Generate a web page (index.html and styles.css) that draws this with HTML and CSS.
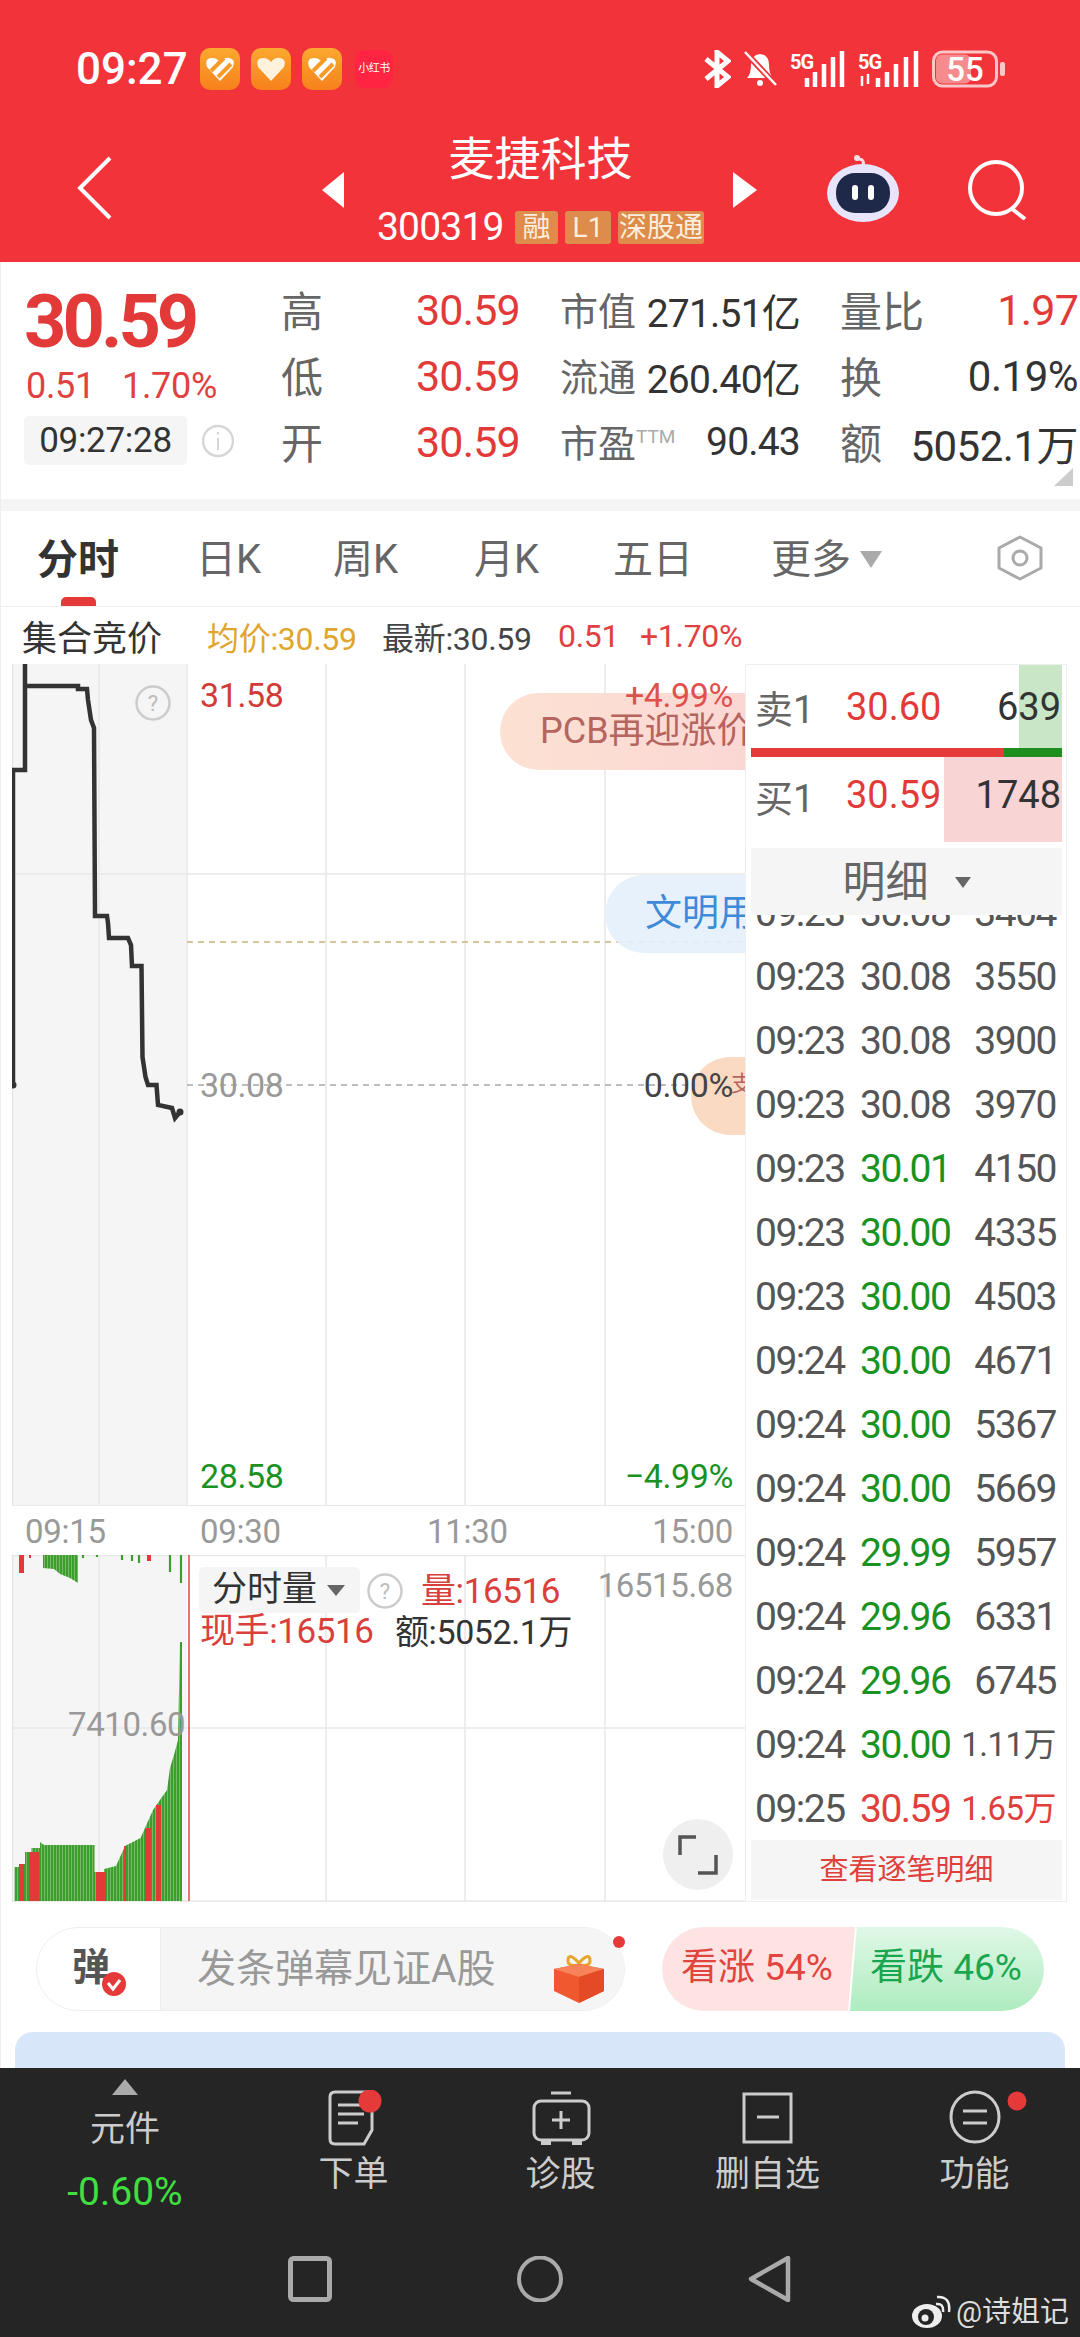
FILE: index.html
```html
<!DOCTYPE html>
<html lang="zh-CN">
<head>
    <meta charset="UTF-8">
    <title>麦捷科技 300319</title>
    <link rel="stylesheet" href="styles.css">
</head>
<body>
<svg class="defs" width="0" height="0">
    <defs>
        <linearGradient id="orange" x1="0" y1="0" x2="0" y2="1">
            <stop offset="0" stop-color="#fba92f"/>
            <stop offset="1" stop-color="#f7801c"/>
        </linearGradient>
        <pattern id="barGreen" width="3" height="10" patternUnits="userSpaceOnUse">
            <rect width="3" height="10" fill="#86c077"/>
            <rect width="2.2" height="10" fill="#3c9e2c"/>
        </pattern>
    </defs>
</svg>
<div class="page">
    <header class="head">
        <div class="status">
            <span class="clock">09:27</span>
            <svg class="app" width="40" height="42" viewBox="0 0 40 42">
                <rect width="40" height="42" rx="10" fill="url(#orange)"/>
                <path d="M20 33 L7 19 Q4 10 12 10 Q17 10 20 14 Q24 9 29 10 Q36 11 33 19Z" fill="#fff"/>
                <path d="M11 23 L24 10 M18 29 L31 16" stroke="#f99a26" stroke-width="4"/>
            </svg>
            <svg class="app" width="40" height="42" viewBox="0 0 40 42">
                <rect width="40" height="42" rx="10" fill="url(#orange)"/>
                <path d="M20 33 L7 19 Q4 10 12 10 Q17 10 20 14 Q24 9 29 10 Q36 11 33 19Z" fill="#fff2dd"/>
            </svg>
            <svg class="app" width="40" height="42" viewBox="0 0 40 42">
                <rect width="40" height="42" rx="10" fill="url(#orange)"/>
                <path d="M20 33 L7 19 Q4 10 12 10 Q17 10 20 14 Q24 9 29 10 Q36 11 33 19Z" fill="#fff"/>
                <path d="M11 23 L24 10 M18 29 L31 16" stroke="#f99a26" stroke-width="4"/>
            </svg>
            <span class="app-red">小红书</span>
            <span class="status-right">
                <svg class="bt" width="28" height="38" viewBox="0 0 28 38">
                    <path d="M3 9 L25 27 L14 36 V2 L25 11 L3 29" fill="none" stroke="#fff" stroke-width="5"/>
                </svg>
                <svg width="36" height="40" viewBox="0 0 36 40">
                    <path d="M5 29 Q9 25 9 16 Q9 6 18 5 Q27 6 27 16 Q27 25 31 29Z" fill="#fff"/>
                    <circle cx="18" cy="34" r="3" fill="#fff"/>
                    <path d="M2 2 L34 36" stroke="#f23339" stroke-width="6"/>
                    <path d="M3 3 L34 36" stroke="#fff" stroke-width="2.5"/>
                </svg>
                <svg width="56" height="38" viewBox="0 0 56 38">
                    <text x="0" y="19" class="net">5G</text>
                    <path d="M17 28 V37 M25 22 V37 M34 14 V37 M43 7 V37 M52 1 V37" stroke="#fff" stroke-width="4.5"/>
                </svg>
                <svg width="62" height="38" viewBox="0 0 62 38">
                    <text x="0" y="19" class="net">5G</text>
                    <path d="M4 26 V36 M10 24 V34" stroke="#fff" stroke-width="2.5"/>
                    <path d="M20 28 V37 M29 22 V37 M38 14 V37 M48 7 V37 M58 1 V37" stroke="#fff" stroke-width="4.5"/>
                </svg>
                <svg width="74" height="38" viewBox="0 0 74 38">
                    <rect x="1.5" y="2" width="63" height="34" rx="9" fill="none" stroke="#fbc6c8" stroke-width="3"/>
                    <rect x="4" y="4.500" width="35" height="29" rx="6" fill="#f68b8e"/>
                    <rect x="68" y="12" width="5" height="14" rx="2" fill="#fbc6c8"/>
                    <text x="33" y="31" class="batt">55</text>
                </svg>
            </span>
        </div>
        <div class="topbar">
            <svg class="back" width="36" height="64" viewBox="0 0 36 64">
                <path d="M33 2 L3 32 L33 62" fill="none" stroke="#fff" stroke-width="4"/>
            </svg>
            <div class="stock">
                <i class="tri-left"></i>
                <div class="stock-mid">
                    <div class="stock-name">麦捷科技</div>
                    <div class="stock-code">
                        <span class="code">300319</span>
                        <span class="tag tag-a">融</span>
                        <span class="tag tag-b">L1</span>
                        <span class="tag tag-c">深股通</span>
                    </div>
                </div>
                <i class="tri-right"></i>
            </div>
            <div class="top-actions">
                <svg width="74" height="68" viewBox="0 0 74 68">
                    <path d="M37 12 Q39 5 32 5" fill="none" stroke="#f6dfe6" stroke-width="3"/>
                    <circle cx="31" cy="4" r="3" fill="#f6dfe6"/>
                    <ellipse cx="37" cy="39" rx="36" ry="29" fill="#e8e4fb"/>
                    <rect x="10" y="19" width="54" height="40" rx="19" fill="#1e2848"/>
                    <rect x="26" y="31" width="6" height="15" rx="3" fill="#fff"/>
                    <rect x="42" y="31" width="6" height="15" rx="3" fill="#fff"/>
                </svg>
                <svg width="62" height="60" viewBox="0 0 62 60">
                    <circle cx="29" cy="28" r="26" fill="none" stroke="#fff" stroke-width="4"/>
                    <path d="M44 48 L58 59" stroke="#fff" stroke-width="4"/>
                </svg>
            </div>
        </div>
    </header>

    <section class="info">
        <div class="info-left">
            <div class="price-big">30.59</div>
            <div class="price-sub"><span>0.51</span><span>1.70%</span></div>
            <div class="price-time">
                <span class="time-box">09:27:28</span>
                <svg width="32" height="34" viewBox="0 0 32 34">
                    <circle cx="16" cy="17" r="15" fill="none" stroke="#d6d6d6" stroke-width="2.500"/>
                    <path d="M16 14 V26 M16 8 V10.500" stroke="#d6d6d6" stroke-width="2"/>
                </svg>
            </div>
        </div>
        <div class="info-grid">
            <div class="cell"><span class="k-lg">高</span><span class="v-red">30.59</span></div>
            <div class="cell"><span class="k">市值</span><span class="v">271.51亿</span></div>
            <div class="cell"><span class="k-lg">量比</span><span class="v-red">1.97</span></div>
            <div class="cell"><span class="k-lg">低</span><span class="v-red">30.59</span></div>
            <div class="cell"><span class="k">流通</span><span class="v">260.40亿</span></div>
            <div class="cell"><span class="k-lg">换</span><span class="v-dark">0.19%</span></div>
            <div class="cell"><span class="k-lg">开</span><span class="v-red">30.59</span></div>
            <div class="cell"><span class="k">市盈<sup class="ttm">TTM</sup></span><span class="v">90.43</span></div>
            <div class="cell"><span class="k-lg">额</span><span class="v-dark">5052.1万</span></div>
        </div>
        <i class="corner"></i>
    </section>

    <nav class="tabs">
        <span class="tab tab-on">分时</span>
        <span class="tab tab-d">日K</span>
        <span class="tab tab-w">周K</span>
        <span class="tab tab-m">月K</span>
        <span class="tab tab-5">五日</span>
        <span class="tab tab-more">更多<i class="tri-down"></i></span>
        <svg class="hex" width="50" height="46" viewBox="0 0 50 46">
            <path d="M25 2 L46 13 V33 L25 44 L4 33 V13Z" fill="none" stroke="#aaa" stroke-width="3" stroke-linejoin="round"/>
            <circle cx="25" cy="23" r="7" fill="none" stroke="#aaa" stroke-width="3"/>
        </svg>
    </nav>

    <div class="sub-info">
        <span class="sub-title">集合竞价</span>
        <span class="sub-avg">均价:30.59</span>
        <span class="sub-new">最新:30.59</span>
        <span class="sub-red sub-a">0.51</span>
        <span class="sub-red sub-b">+1.70%</span>
    </div>

    <main class="main">
        <div class="charts">
            <div class="price-chart">
                <svg class="plot" width="733" height="842" viewBox="12 664 733 842">
                    <rect x="12" y="664" width="175" height="842" fill="#f5f5f5"/>
                    <path d="M99 664 V1506 M187 664 V1506 M326 664 V1506 M465 664 V1506 M605 664 V1506 M12 874 H745" stroke="#e8e8e8" stroke-width="1.500"/>
                    <path d="M12.500 664 V1506" stroke="#e4e4e4" stroke-width="1.500"/>
                    <path d="M187 942 H745" stroke="#c9b277" stroke-width="1.500" stroke-dasharray="6 5"/>
                    <path d="M187 1085 H745" stroke="#a8a8a8" stroke-width="1.500" stroke-dasharray="6 5"/>
                    <path d="M12 1506 H745" stroke="#e8e8e8" stroke-width="2"/>
                    <polyline fill="none" stroke="#333" stroke-width="4.500" points="13,1085 13,770 25,770 25,664 25,686 78,686 78,689 87,689 88,700 91,720 94,728 95,916 107,916 108,923 109,938 128,938 131,945 132,966 141.500,966 142.500,1057 145.500,1077 148,1085 156.500,1085 158,1105 172,1108 175,1118 180,1112"/>
                    <circle cx="13" cy="1085" r="3.500" fill="#333"/>
                    <circle cx="180" cy="1112" r="3.500" fill="#333"/>
                </svg>
                <svg class="help" width="36" height="36" viewBox="0 0 36 36">
                    <circle cx="18" cy="18" r="16.500" fill="none" stroke="#ccc" stroke-width="2.500"/>
                    <text x="18" y="26" class="help-q">?</text>
                </svg>
                <div class="pill pill-pcb">PCB再迎涨价</div>
                <div class="pill pill-civ">文明用语</div>
                <div class="pill pill-hit"><span>支持</span></div>
                <span class="lbl lbl-top-l">31.58</span>
                <span class="lbl lbl-top-r">+4.99%</span>
                <span class="lbl lbl-mid-l">30.08</span>
                <span class="lbl lbl-mid-r">0.00%</span>
                <span class="lbl lbl-low-l">28.58</span>
                <span class="lbl lbl-low-r">−4.99%</span>
            </div>
            <div class="time-axis">
                <span>09:15</span>
                <span>09:30</span>
                <span>11:30</span>
                <span class="t-end">15:00</span>
            </div>
            <div class="vol-chart">
                <svg class="plot" width="733" height="347" viewBox="12 1555 733 347">
                    <rect x="12" y="1555" width="175" height="347" fill="#f5f5f5"/>
                    <path d="M99 1555 V1901 M326 1555 V1901 M465 1555 V1901 M605 1555 V1901 M12 1728 H745" stroke="#e8e8e8" stroke-width="1.500"/>
                    <path d="M12 1555.500 H745 M12 1901 H745" stroke="#e8e8e8" stroke-width="1.500"/>
                    <path d="M12.500 1555 V1901" stroke="#e4e4e4" stroke-width="1.500"/>
                    <polygon fill="url(#barGreen)" points="14.500,1901 14.500,1867 19,1867 19,1864 25,1864 25,1852 31.500,1852 31.500,1848 40,1848 40,1842 44,1845 94.500,1845 94.500,1872 104,1872 104,1869 116,1866 125,1846 140.500,1838 145,1828 153,1810 162,1797 167,1790 170,1768 174.500,1753 178,1740 180,1642 182,1642 182,1901"/>
                    <polygon fill="url(#barGreen)" points="43,1555 43,1568 54,1569 60,1574 70,1578 78,1583 78,1555"/>
                    <path d="M83 1555 V1558 M97 1555 V1557 M122 1555 V1560 M132 1555 V1561 M139 1555 V1563 M170 1555 V1572 M181 1555 V1583" stroke="#3c9e2c" stroke-width="2.200"/>
                    <path d="M19 1555 H24 V1573 H19Z M29 1555 H31 V1558 H29Z M147 1555 H151 V1561 H147Z" fill="#e23a38"/>
                    <path d="M19 1901 V1864 H24 V1901Z M29 1901 V1852 H39 V1901Z M96 1901 V1872 H106 V1901Z M124 1901 V1846 H126 V1901Z M145 1901 V1828 H151 V1901Z M156 1901 V1805 H161 V1901Z" fill="#e23a38"/>
                    <path d="M189 1555 V1901" stroke="#e6433f" stroke-width="1.500"/>
                </svg>
                <div class="vol-select">分时量<i class="tri-small"></i></div>
                <svg class="vol-help" width="36" height="36" viewBox="0 0 36 36">
                    <circle cx="18" cy="18" r="16.500" fill="none" stroke="#ccc" stroke-width="2.500"/>
                    <text x="18" y="26" class="help-q">?</text>
                </svg>
                <span class="lbl vol-a">量:16516</span>
                <span class="lbl vol-max">16515.68</span>
                <span class="lbl vol-b">现手:16516</span>
                <span class="lbl vol-c">额:5052.1万</span>
                <span class="lbl vol-mid">7410.60</span>
                <div class="expand">
                    <svg width="40" height="40" viewBox="0 0 40 40">
                        <path d="M2 20 V2 H18 M38 20 V38 H20" fill="none" stroke="#555" stroke-width="3.500"/>
                    </svg>
                </div>
            </div>
        </div>

        <aside class="side">
            <div class="quote quote-sell">
                <i class="depth depth-sell"></i>
                <span class="q-key">卖1</span>
                <span class="q-price">30.60</span>
                <span class="q-qty">639</span>
            </div>
            <div class="ratio"><i class="ratio-red" style="width:253px"></i><i class="ratio-green"></i></div>
            <div class="quote quote-buy">
                <i class="depth depth-buy"></i>
                <span class="q-key">买1</span>
                <span class="q-price">30.59</span>
                <span class="q-qty">1748</span>
            </div>
            <div class="detail-head">明细<i class="tri-small"></i></div>
            <div class="ticks">
                <div class="tick"><span>09:23</span><span>30.08</span><span>3404</span></div>
                <div class="tick"><span>09:23</span><span>30.08</span><span>3550</span></div>
                <div class="tick"><span>09:23</span><span>30.08</span><span>3900</span></div>
                <div class="tick"><span>09:23</span><span>30.08</span><span>3970</span></div>
                <div class="tick"><span>09:23</span><span class="up-g">30.01</span><span>4150</span></div>
                <div class="tick"><span>09:23</span><span class="up-g">30.00</span><span>4335</span></div>
                <div class="tick"><span>09:23</span><span class="up-g">30.00</span><span>4503</span></div>
                <div class="tick"><span>09:24</span><span class="up-g">30.00</span><span>4671</span></div>
                <div class="tick"><span>09:24</span><span class="up-g">30.00</span><span>5367</span></div>
                <div class="tick"><span>09:24</span><span class="up-g">30.00</span><span>5669</span></div>
                <div class="tick"><span>09:24</span><span class="up-g">29.99</span><span>5957</span></div>
                <div class="tick"><span>09:24</span><span class="up-g">29.96</span><span>6331</span></div>
                <div class="tick"><span>09:24</span><span class="up-g">29.96</span><span>6745</span></div>
                <div class="tick"><span>09:24</span><span class="up-g">30.00</span><span class="small">1.11万</span></div>
                <div class="tick"><span>09:25</span><span class="up-r">30.59</span><span class="small up-r">1.65万</span></div>
            </div>
            <div class="detail-btn">查看逐笔明细</div>
        </aside>
    </main>

    <div class="actions">
        <div class="danmu">
            <div class="danmu-key">
                <span>弹</span>
                <svg class="danmu-check" width="26" height="26" viewBox="0 0 26 26">
                    <circle cx="13" cy="13" r="12" fill="#e5393a"/>
                    <path d="M7 12 L12 18 L19 9" fill="none" stroke="#fff" stroke-width="3"/>
                </svg>
            </div>
            <div class="danmu-input">发条弹幕见证A股</div>
            <svg class="gift" width="50" height="50" viewBox="0 0 50 50">
                <path d="M25 10 Q14 -2 14 8 Q14 14 25 12 Q36 14 36 8 Q36 -2 25 10Z" fill="none" stroke="#e6a52d" stroke-width="3"/>
                <path d="M0 16 L25 11 L50 16 V38 L25 50 L0 38Z" fill="#f0592f"/>
                <path d="M0 16 L25 24 L50 16 L25 11Z" fill="#f7835a"/>
                <path d="M25 24 V50 L50 38 V16Z" fill="#e44a26"/>
            </svg>
            <i class="danmu-dot"></i>
        </div>
        <div class="vote">
            <div class="vote-up">看涨 54%</div>
            <div class="vote-down">看跌 46%</div>
        </div>
    </div>

    <div class="blue-card"></div>

    <footer class="bottom">
        <div class="tools">
            <div class="tool tool-first">
                <i class="tri-up"></i>
                <span class="tool-name">元件</span>
                <span class="tool-pct">-0.60%</span>
            </div>
            <div class="tool">
                <svg width="64" height="56" viewBox="0 0 64 56">
                    <path d="M13 2 H45 Q50 2 50 7 V40 L42 54 H13 Q8 54 8 49 V7 Q8 2 13 2Z" fill="none" stroke="#ccc" stroke-width="3"/>
                    <path d="M16 15 H40 M16 24 H42 M16 33 H36" stroke="#ccc" stroke-width="3"/>
                    <circle cx="48" cy="11" r="11.500" fill="#e5393a"/>
                </svg>
                <span class="tool-name">下单</span>
            </div>
            <div class="tool">
                <svg width="64" height="56" viewBox="0 0 64 56">
                    <path d="M22 3 H42" stroke="#ccc" stroke-width="3"/>
                    <rect x="5" y="11" width="55" height="39" rx="7" fill="none" stroke="#ccc" stroke-width="3"/>
                    <path d="M32 21 V39 M23 30 H41" stroke="#ccc" stroke-width="3"/>
                    <path d="M12 50 H22 V55 H12Z M43 50 H53 V55 H43Z" fill="#ccc"/>
                </svg>
                <span class="tool-name">诊股</span>
            </div>
            <div class="tool">
                <svg width="64" height="56" viewBox="0 0 64 56">
                    <rect x="8" y="4" width="47" height="48" fill="none" stroke="#ccc" stroke-width="3"/>
                    <path d="M21 27 H43" stroke="#ccc" stroke-width="3"/>
                </svg>
                <span class="tool-name">删自选</span>
            </div>
            <div class="tool">
                <svg class="tool-over" width="64" height="56" viewBox="0 0 64 56">
                    <ellipse cx="32" cy="27" rx="24" ry="25" fill="none" stroke="#ccc" stroke-width="3"/>
                    <path d="M20 21 H44 M20 33 H44" stroke="#ccc" stroke-width="3"/>
                    <circle cx="74" cy="11" r="9.500" fill="#e5393a"/>
                </svg>
                <span class="tool-name">功能</span>
            </div>
        </div>
        <div class="sysbar">
            <svg width="46" height="46" viewBox="0 0 46 46">
                <rect x="3.500" y="2.500" width="39" height="41" rx="3" fill="none" stroke="#aaa" stroke-width="5"/>
            </svg>
            <svg width="46" height="46" viewBox="0 0 46 46">
                <ellipse cx="23" cy="23" rx="21" ry="21.500" fill="none" stroke="#aaa" stroke-width="4"/>
            </svg>
            <svg width="46" height="46" viewBox="0 0 46 46">
                <path d="M41 2 L4 23 L41 44Z" fill="none" stroke="#aaa" stroke-width="4.500" stroke-linejoin="round"/>
            </svg>
        </div>
        <div class="mark">
            <svg width="40" height="34" viewBox="0 0 40 34">
                <ellipse cx="16" cy="21" rx="15" ry="12" fill="#eee"/>
                <circle cx="15" cy="22" r="8" fill="#252525"/>
                <circle cx="14" cy="23" r="3.500" fill="#eee"/>
                <path d="M25 9 Q33 8 32 17 M26 2 Q40 1 38 17" fill="none" stroke="#eee" stroke-width="2.500"/>
            </svg>
            <span>@诗姐记</span>
        </div>
    </footer>
</div>
</body>
</html>
```

FILE: styles.css
```css
* {
    box-sizing: border-box;
}
html, body {
    margin: 0;
    padding: 0;
}
body {
    width: 1080px;
    height: 2337px;
    overflow: hidden;
    background: #fff;
    font-family: Roboto, "Noto Sans CJK SC", sans-serif;
    color: #333;
}
i {
    display: block;
    font-style: normal;
}
svg {
    display: block;
}
.defs {
    position: absolute;
}
.page {
    width: 1080px;
    height: 2337px;
    display: flex;
    flex-direction: column;
    border-left: 1px solid #eee;
}

/* red header */
.head {
    height: 262px;
    margin-left: -1px;
    background: #f23339;
    color: #fff;
}
.status {
    height: 138px;
    padding: 0 74px 0 76px;
    display: flex;
    align-items: center;
}
.clock {
    width: 124px;
    font-size: 44px;
    font-weight: 500;
}
.app {
    margin-right: 11px;
}
.app-red {
    width: 38px;
    height: 38px;
    margin-left: 2px;
    border-radius: 9px;
    background: #ff2442;
    font-size: 11px;
    line-height: 38px;
    text-align: center;
    white-space: nowrap;
    letter-spacing: -0.5px;
}
.status-right {
    margin-left: auto;
    display: flex;
    align-items: center;
    gap: 12px;
}
.bt {
    margin-right: -1px;
}
.net {
    font: 700 20px Roboto, sans-serif;
    fill: #fff;
    letter-spacing: -1px;
}
.batt {
    font: 500 33px Roboto, sans-serif;
    fill: #fff;
    text-anchor: middle;
}
.topbar {
    height: 124px;
    display: grid;
    grid-template-columns: 322px 435px 323px;
}
.back {
    margin: 18px 0 0 77px;
}
.stock {
    display: flex;
}
.tri-left, .tri-right {
    margin-top: 34px;
    width: 0;
    height: 0;
    border-top: 18px solid transparent;
    border-bottom: 18px solid transparent;
}
.tri-left {
    border-right: 22px solid #fff;
}
.tri-right {
    margin-left: auto;
    border-left: 24px solid #fff;
}
.stock-mid {
    width: 327px;
    margin-left: 33px;
}
.stock-name {
    height: 44px;
    margin-top: -1px;
    font-size: 46px;
    line-height: 44px;
    text-align: center;
}
.stock-code {
    margin-top: 29px;
    display: flex;
    align-items: center;
}
.code {
    width: 138px;
    font-size: 39px;
    line-height: 34px;
    letter-spacing: -0.8px;
}
.tag {
    height: 33px;
    margin-right: 7px;
    border-radius: 3px;
    background: #de8c4b;
    color: #fbeede;
    font-size: 28px;
    line-height: 33px;
    text-align: center;
    white-space: nowrap;
}
.tag-a { width: 43px; }
.tag-b { width: 46px; }
.tag-c { width: 86px; margin-right: 0; overflow: hidden; }
.top-actions {
    padding: 16px 0 0 69px;
    display: flex;
    gap: 67px;
}
.top-actions svg:last-child {
    margin-top: 6px;
}

/* quote summary */
.info {
    position: relative;
    height: 249px;
    border-bottom: 12px solid #f5f5f5;
    display: flex;
}
.info-left {
    width: 280px;
    padding: 24px 0 0 23px;
}
.price-big {
    height: 72px;
    color: #e23a38;
    font-size: 74px;
    font-weight: 700;
    line-height: 72px;
    letter-spacing: -4px;
}
.price-sub {
    margin-top: 6px;
    padding-left: 2px;
    display: flex;
    gap: 27px;
    color: #e0413f;
    font-size: 36px;
    line-height: 44px;
    letter-spacing: -0.3px;
}
.price-time {
    margin-top: 8px;
    display: flex;
    align-items: center;
    gap: 15px;
}
.time-box {
    width: 163px;
    height: 49px;
    border-radius: 5px;
    background: #f5f5f5;
    color: #333;
    font-size: 35px;
    line-height: 49px;
    text-align: center;
    letter-spacing: -0.3px;
}
.info-grid {
    width: 797px;
    padding-top: 15px;
    display: grid;
    grid-template-columns: 239px 240px 238px;
    grid-auto-rows: 66px;
    column-gap: 40px;
}
.cell {
    display: flex;
    justify-content: space-between;
    align-items: center;
}
.k-lg {
    margin-top: -4px;
    color: #666;
    font-size: 42px;
}
.k {
    margin-top: -3px;
    color: #666;
    font-size: 38px;
}
.ttm {
    color: #aaa;
    font-size: 19px;
    vertical-align: 14px;
    line-height: 0;
}
.v-red {
    color: #e23a38;
    font-size: 43px;
    letter-spacing: -0.8px;
}
.v {
    color: #333;
    font-size: 39px;
    letter-spacing: -0.8px;
}
.v-dark {
    color: #333;
    font-size: 42px;
    letter-spacing: -0.5px;
}
.corner {
    position: absolute;
    right: 7px;
    top: 206px;
    width: 0;
    height: 0;
    border-left: 19px solid transparent;
    border-bottom: 18px solid #ccc;
}

/* period tabs */
.tabs {
    position: relative;
    height: 96px;
    border-bottom: 1px solid #eee;
}
.tab {
    position: absolute;
    top: 26px;
    color: #666;
    font-size: 40px;
    line-height: 46px;
    white-space: nowrap;
}
.tab-on {
    left: 36px;
    color: #333;
    font-size: 41px;
    font-weight: 700;
}
.tab-on::after {
    content: "";
    position: absolute;
    left: 24px;
    top: 60px;
    width: 35px;
    height: 9px;
    border-radius: 5px 5px 0 0;
    background: #e5393a;
}
.tab-d { left: 195px; }
.tab-w { left: 332px; }
.tab-m { left: 473px; }
.tab-5 { left: 612px; }
.tab-more {
    left: 770px;
    display: flex;
}
.tri-down {
    margin: 14px 0 0 9px;
    width: 0;
    height: 0;
    border-left: 11px solid transparent;
    border-right: 11px solid transparent;
    border-top: 17px solid #aaa;
}
.hex {
    position: absolute;
    left: 994px;
    top: 24px;
}

.sub-info {
    height: 57px;
    display: flex;
    align-items: center;
    font-size: 32px;
    white-space: nowrap;
    letter-spacing: -0.3px;
}
.sub-title { margin-left: 21px; width: 185px; font-size: 35px; letter-spacing: 0; }
.sub-avg { width: 175px; color: #e0a52c; }
.sub-new { width: 176px; color: #444; }
.sub-red { color: #e0413f; }
.sub-a { width: 82px; }

/* chart area */
.main {
    height: 1238px;
    padding-left: 11px;
    display: flex;
}
.charts {
    width: 733px;
}
.price-chart {
    position: relative;
    height: 842px;
    overflow: hidden;
}
.plot {
    position: absolute;
    left: 0;
    top: 0;
}
.help {
    position: absolute;
    left: 123px;
    top: 21px;
}
.help-q {
    font: 400 22px Roboto, sans-serif;
    fill: #bbb;
    text-anchor: middle;
}
.pill {
    position: absolute;
    border-radius: 39px 0 0 39px;
    white-space: nowrap;
    overflow: hidden;
}
.pill-pcb {
    left: 488px;
    top: 29px;
    width: 245px;
    height: 77px;
    padding-left: 40px;
    background: linear-gradient(90deg, rgba(252,224,208,.95), rgba(251,213,210,.95));
    color: #b5645e;
    font-size: 36px;
    line-height: 77px;
}
.pill-civ {
    left: 593px;
    top: 211px;
    width: 140px;
    height: 78px;
    padding-left: 40px;
    background: rgba(228,240,252,.9);
    color: #3f8ad8;
    font-size: 37px;
    line-height: 78px;
}
.pill-hit {
    left: 679px;
    top: 393px;
    width: 54px;
    height: 78px;
    padding-left: 40px;
    background: rgba(251,214,190,.9);
    color: #b5645e;
    font-size: 22px;
    line-height: 54px;
}
.lbl {
    position: absolute;
    font-size: 34px;
    line-height: 40px;
    white-space: nowrap;
    letter-spacing: -0.4px;
}
.lbl-top-l { left: 188px; top: 11px; color: #d23a38; }
.lbl-top-r { right: 12px; top: 11px; color: #e0504c; }
.lbl-mid-l { left: 188px; top: 401px; color: #999; }
.lbl-mid-r { right: 12px; top: 401px; color: #444; }
.lbl-low-l { left: 188px; top: 792px; color: #1a921f; }
.lbl-low-r { right: 12px; top: 792px; color: #1a921f; }
.time-axis {
    height: 49px;
    padding: 0 12px 0 13px;
    display: grid;
    grid-template-columns: 175px 227px 1fr auto;
    color: #999;
    font-size: 33px;
    line-height: 52px;
    letter-spacing: -0.3px;
}
.vol-chart {
    position: relative;
    height: 347px;
}
.vol-select {
    position: absolute;
    left: 187px;
    top: 12px;
    width: 161px;
    height: 46px;
    padding-left: 13px;
    border-radius: 5px;
    background: #f5f5f5;
    display: flex;
    font-size: 35px;
    line-height: 46px;
}
.tri-small {
    margin: 18px 0 0 10px;
    width: 0;
    height: 0;
    border-left: 9px solid transparent;
    border-right: 9px solid transparent;
    border-top: 11px solid #666;
}
.vol-help {
    position: absolute;
    left: 355px;
    top: 18px;
}
.vol-a { left: 409px; top: 17px; color: #d9403c; font-size: 35px; }
.vol-max { right: 12px; top: 11px; color: #999; font-size: 33px; }
.vol-b { left: 188px; top: 57px; color: #d9403c; font-size: 35px; }
.vol-c { left: 383px; top: 57px; color: #333; font-size: 34px; }
.vol-mid { left: 56px; top: 150px; color: #999; font-size: 33px; }
.expand {
    position: absolute;
    left: 651px;
    top: 264px;
    width: 70px;
    height: 71px;
    border-radius: 50%;
    background: #efefef;
    display: flex;
    align-items: center;
    justify-content: center;
}

/* right panel */
.side {
    width: 322px;
    height: 1238px;
    padding: 0 4px 0 5px;
    border: 1px solid #eee;
}
.quote {
    position: relative;
    display: flex;
    align-items: center;
    padding: 0 1px 0 4px;
    font-size: 38px;
}
.quote-sell { height: 83px; }
.quote-buy { height: 85px; padding-bottom: 9px; }
.depth {
    position: absolute;
    right: 0;
    top: 0;
    bottom: 0;
}
.depth-sell { width: 43px; background: #c9e7c6; }
.depth-buy { width: 118px; background: #f9d4d4; }
.q-key {
    position: relative;
    width: 91px;
    color: #666;
}
.q-price {
    position: relative;
    color: #e23a38;
}
.q-qty {
    position: relative;
    margin-left: auto;
    color: #333;
}
.ratio {
    height: 9px;
    display: flex;
    background: #1e8f1e;
}
.ratio-red {
    background: #e5393a;
}
.detail-head {
    height: 67px;
    margin-top: 6px;
    background: #f5f5f5;
    display: flex;
    justify-content: center;
    color: #666;
    font-size: 43px;
    line-height: 68px;
}
.detail-head .tri-small {
    margin: 29px 0 0 26px;
    border-left-width: 8px;
    border-right-width: 8px;
}
.ticks {
    height: 925px;
    overflow: hidden;
}
.tick {
    height: 64px;
    padding: 0 6px 0 4px;
    display: grid;
    grid-template-columns: 105px 1fr auto;
    align-items: center;
    color: #555;
    font-size: 39px;
    line-height: 64px;
    letter-spacing: -1.5px;
}
.tick:first-child {
    margin-top: -34px;
}
.tick .small {
    font-size: 33px;
    letter-spacing: -0.5px;
}
.up-g { color: #1a921f; }
.up-r { color: #e0403c; }
.detail-btn {
    height: 60px;
    background: #f5f5f5;
    color: #e0403c;
    font-size: 29px;
    line-height: 60px;
    text-align: center;
}

/* danmu and vote row */
.actions {
    height: 130px;
    padding: 25px 36px 0 35px;
    display: flex;
    justify-content: space-between;
}
.danmu {
    position: relative;
    width: 589px;
    height: 84px;
    border: 1px solid #eee;
    border-radius: 42px;
    display: flex;
}
.danmu-key {
    position: relative;
    width: 124px;
    padding-left: 35px;
    border-right: 1px solid #eee;
    color: #555;
    font-size: 38px;
    font-weight: 700;
    line-height: 78px;
}
.danmu-check {
    position: absolute;
    left: 64px;
    top: 43px;
}
.danmu-input {
    flex: 1;
    padding-left: 36px;
    border-radius: 0 42px 42px 0;
    background: #f5f5f5;
    color: #999;
    font-size: 39px;
    line-height: 82px;
    white-space: nowrap;
}
.gift {
    position: absolute;
    left: 517px;
    top: 25px;
}
.danmu-dot {
    position: absolute;
    left: 576px;
    top: 8px;
    width: 12px;
    height: 12px;
    border-radius: 50%;
    background: #e5393a;
}
.vote {
    width: 382px;
    height: 84px;
    border-radius: 42px;
    overflow: hidden;
    display: flex;
    font-size: 37px;
    line-height: 82px;
    white-space: nowrap;
}
.vote-up {
    width: 193px;
    padding-left: 19px;
    background: #fde4e2;
    color: #e2453f;
    clip-path: polygon(0 0, 100% 0, 96.4% 100%, 0 100%);
}
.vote-down {
    flex: 1;
    margin-left: -5px;
    padding-left: 20px;
    background: linear-gradient(180deg, #e0f8e7, #aeecbf);
    color: #1aa650;
    clip-path: polygon(3.5% 0, 100% 0, 100% 100%, 0 100%);
}
.blue-card {
    flex: 1;
    margin: 0 15px 0 14px;
    border-radius: 18px 18px 0 0;
    background: #d8e6f9;
}

/* dark bottom bar */
.bottom {
    position: relative;
    height: 269px;
    margin-left: -1px;
    background: #252525;
    color: #ccc;
}
.tools {
    height: 188px;
    display: grid;
    grid-template-columns: 250px 207px 207px 207px 207px;
}
.tool {
    padding-top: 22px;
    display: flex;
    flex-direction: column;
    align-items: center;
}
.tool-name {
    margin-top: 7px;
    font-size: 35px;
    line-height: 44px;
}
.tool-over {
    overflow: visible;
}
.tool-first {
    padding-top: 11px;
}
.tri-up {
    width: 0;
    height: 0;
    border-left: 13px solid transparent;
    border-right: 13px solid transparent;
    border-bottom: 16px solid #aaa;
}
.tool-first .tool-name {
    margin-top: 13px;
}
.tool-pct {
    margin-top: 18px;
    color: #3fe03f;
    font-size: 39px;
    line-height: 44px;
}
.sysbar {
    display: flex;
    justify-content: center;
    gap: 184px;
}
.mark {
    position: absolute;
    right: 11px;
    top: 224px;
    display: flex;
    align-items: center;
    gap: 5px;
    color: #ddd;
    font-size: 29px;
    line-height: 40px;
}
```
